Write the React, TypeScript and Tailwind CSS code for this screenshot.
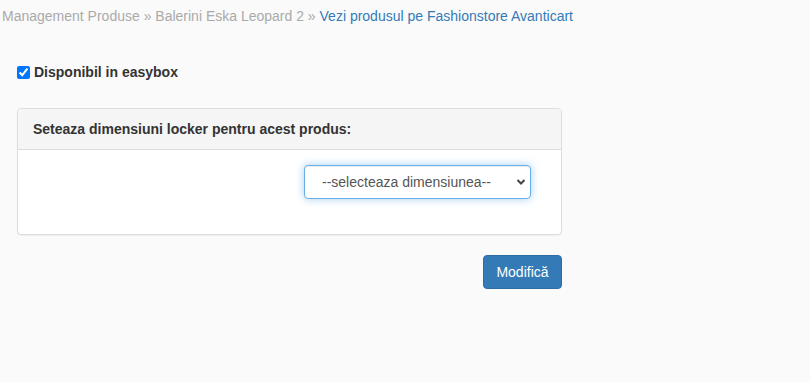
import { useState } from "react";

export default function App() {
  const [easybox, setEasybox] = useState(true);

  return (
    <div className="min-h-[382px] w-full bg-[#fafafa] text-[14px] leading-[20px] text-[#333] font-['Liberation_Sans',Arial,sans-serif]">
      {/* breadcrumb */}
      <div className="pl-[2px] pt-[6px] text-[#aaa]">
        Management Produse &raquo; Balerini Eska Leopard 2 &raquo;{" "}
        <a href="#" className="text-[#337ab7]">
          Vezi produsul pe Fashionstore Avanticart
        </a>
      </div>

      <div className="pl-[17px] pt-[36px] w-[562px]">
        <label className="flex items-center gap-[4px] font-bold">
          <input
            type="checkbox"
            checked={easybox}
            onChange={(e) => setEasybox(e.target.checked)}
            className="m-0 h-[13px] w-[13px] accent-[#0075ff]"
          />
          Disponibil in easybox
        </label>

        <div className="mt-[26px] rounded-[4px] border border-[#ddd] bg-white shadow-[0_1px_1px_rgba(0,0,0,0.05)]">
          <div className="rounded-t-[3px] border-b border-[#ddd] bg-[#f5f5f5] px-[15px] py-[10px] font-bold">
            Seteaza dimensiuni locker pentru acest produs:
          </div>
          <div className="flex justify-end pr-[30px] pt-[15px] pb-[35px]">
            <div className="relative w-[227px]">
              <select className="h-[34px] w-full appearance-none rounded-[4px] border border-[#66afe9] bg-white pl-[17px] pr-[28px] text-[14px] text-[#555] shadow-[inset_0_1px_1px_rgba(0,0,0,0.075),0_0_8px_rgba(102,175,233,0.6)] outline-none">
                <option>--selecteaza dimensiunea--</option>
                <option>S</option>
                <option>M</option>
                <option>L</option>
              </select>
              <svg
                className="pointer-events-none absolute right-[5px] top-[12px]"
                width="10"
                height="10"
                viewBox="0 0 10 10"
              >
                <path d="M1.5 3 L5 6.5 L8.5 3" fill="none" stroke="#444" strokeWidth="2" />
              </svg>
            </div>
          </div>
        </div>

        <div className="mt-[20px] flex justify-end">
          <button
            type="button"
            className="h-[34px] w-[79px] rounded-[4px] border border-[#2e6da4] bg-[#337ab7] text-[14px] text-white"
          >
            Modifică
          </button>
        </div>
      </div>
    </div>
  );
}
